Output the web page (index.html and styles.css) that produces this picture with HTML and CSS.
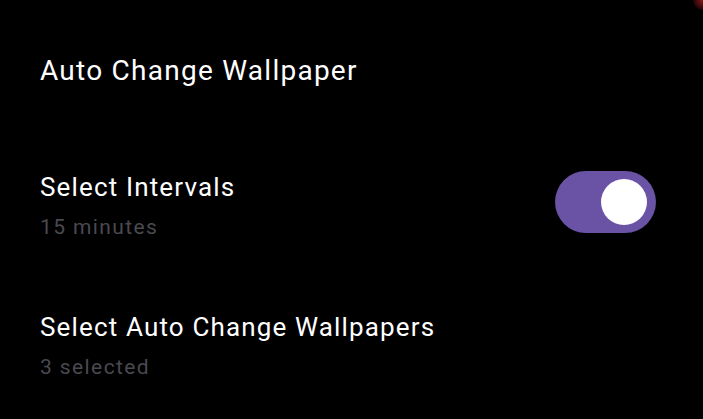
FILE: index.html
```html
<!DOCTYPE html>
<html>
<head>
<meta charset="utf-8">
<link rel="stylesheet" href="styles.css">
</head>
<body>
<div class="screen">
  <div class="corner-glow"></div>
  <h1 class="title">Auto Change Wallpaper</h1>
  <div class="row">
    <div class="text">
      <div class="label">Select Intervals</div>
      <div class="sub">15 minutes</div>
    </div>
    <div class="switch"><div class="thumb"></div></div>
  </div>
  <div class="row">
    <div class="text">
      <div class="label">Select Auto Change Wallpapers</div>
      <div class="sub">3 selected</div>
    </div>
  </div>
</div>
</body>
</html>
```
FILE: styles.css
```css
html, body {
  margin: 0;
  padding: 0;
  background: #000;
}
.screen {
  position: relative;
  width: 703px;
  height: 419px;
  overflow: hidden;
  background: #000;
  font-family: Roboto, "Noto Sans", sans-serif;
  color: #fff;
  padding: 0 47px 0 40px;
  box-sizing: border-box;
}
.corner-glow {
  position: absolute;
  top: -10px;
  right: -10px;
  width: 20px;
  height: 20px;
  border-radius: 50%;
  background: radial-gradient(circle, rgba(170,30,30,0.85) 0%, rgba(110,20,20,0.45) 55%, rgba(0,0,0,0) 100%);
}
.title {
  margin: 0;
  padding-top: 53px;
  font-size: 28px;
  font-weight: 400;
  line-height: 36px;
  letter-spacing: 1.25px;
}
.row {
  display: flex;
  align-items: flex-start;
  justify-content: space-between;
}
.text {
  display: flex;
  flex-direction: column;
}
.title + .row {
  margin-top: 82px;
}
.row + .row {
  margin-top: 70px;
}
.label {
  font-size: 26px;
  line-height: 32px;
  letter-spacing: 1.15px;
}
.sub {
  font-size: 21px;
  line-height: 28px;
  color: #4a4950;
  margin-top: 10px;
  letter-spacing: 1.4px;
}
.switch {
  width: 101px;
  height: 62px;
  border-radius: 31px;
  background: #6a52a5;
  display: flex;
  align-items: center;
  justify-content: flex-end;
  padding-right: 9px;
  box-sizing: border-box;
}
.thumb {
  width: 46px;
  height: 46px;
  border-radius: 50%;
  background: #fff;
}
```
